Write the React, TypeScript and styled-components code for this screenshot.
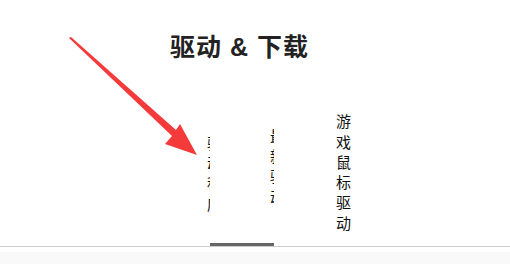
import React from "react";
import styled, { createGlobalStyle } from "styled-components";

const Global = createGlobalStyle`
  html, body { margin: 0; padding: 0; background: #fff; }
  body { font-family: "Liberation Sans", "Noto Sans CJK SC", sans-serif; color: #222; }
`;

const Page = styled.div`
  position: relative;
  width: 510px;
  height: 264px;
  overflow: hidden;
  display: flex;
  flex-direction: column;
`;

const Title = styled.h2`
  margin: 0;
  padding: 32px 0 0 170px;
  height: 30px;
  font-size: 25px;
  line-height: 30px;
  letter-spacing: 1px;
  font-weight: 700;
  color: #222;
  font-family: "Liberation Sans", "Noto Sans CJK SC", sans-serif;
`;

const TabBar = styled.div`
  margin-top: 44px;
  display: flex;
  align-items: flex-end;
  padding-left: 207px;
  border-bottom: 1px solid #cccccc;
  height: 140px;
`;

const Tab = styled.div<{ $w: number; $gap?: number; $active?: boolean; $pb: number; $align: "start" | "end" }>`
  width: ${(p) => p.$w}px;
  margin-left: ${(p) => p.$gap ?? 0}px;
  overflow: hidden;
  display: flex;
  justify-content: ${(p) => (p.$align === "end" ? "flex-end" : "flex-start")};
  padding-bottom: ${(p) => p.$pb}px;
  border-bottom: 3px solid ${(p) => (p.$active ? "#666666" : "transparent")};
`;

const TabText = styled.span<{ $shift?: number }>`
  display: block;
  flex: none;
  width: 16px;
  font-size: 15px;
  line-height: 20.3px;
  color: #111;
  word-break: break-all;
  margin-right: ${(p) => p.$shift ?? 0}px;
  font-family: "Noto Sans CJK SC", sans-serif;
`;

const Footer = styled.div`
  margin-top: 5px;
  flex: 1;
  background: #f9f9f9;
`;

const Arrow = styled.svg`
  position: absolute;
  left: 0;
  top: 0;
  pointer-events: none;
`;

export default function App() {
  return (
    <Page>
      <Global />
      <Title>驱动 &amp; 下载</Title>
      <TabBar>
        <Tab $w={3} $pb={29} $align="start">
          <TabText>驱动程序</TabText>
        </Tab>
        <Tab $w={64} $active $pb={36} $align="end">
          <TabText $shift={-12}>最新驱动</TabText>
        </Tab>
        <Tab $w={20} $gap={62} $pb={10} $align="start">
          <TabText>游戏鼠标驱动</TabText>
        </Tab>
      </TabBar>
      <Footer />
      <Arrow width="510" height="264" viewBox="0 0 510 264">
        <polygon points="69,38 71,37 176,130 180,124 197,155 165,144 172,136" fill="#f43a3a" />
      </Arrow>
    </Page>
  );
}
